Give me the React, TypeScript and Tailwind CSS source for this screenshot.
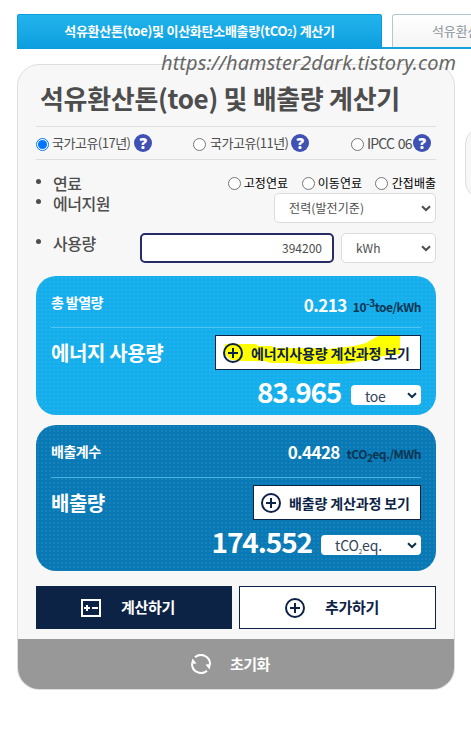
import React from "react";

function Radio({ checked = false }: { checked?: boolean }) {
  return (
    <span
      className={
        checked
          ? "flex size-[13px] shrink-0 items-center justify-center rounded-full border border-[#0075ff] bg-white"
          : "block size-[13px] shrink-0 rounded-full border border-[#767676] bg-white"
      }
    >
      {checked && <span className="size-[9px] rounded-full bg-[#0075ff]" />}
    </span>
  );
}

function Help() {
  return (
    <span className="flex size-[18px] shrink-0 items-center justify-center rounded-full bg-[#3f51b5] font-['Open_Sans',sans-serif] text-[15px] leading-[18px] font-extrabold text-white">
      ?
    </span>
  );
}

function Chevron({ className }: { className: string }) {
  return (
    <svg viewBox="0 0 10 7" className={`h-[7px] w-[10px] shrink-0 ${className}`} fill="none" stroke="currentColor" strokeWidth="2">
      <path d="M1 1.2 5 5 9 1.2" />
    </svg>
  );
}

function Plus() {
  return (
    <svg viewBox="0 0 20 20" className="size-5 shrink-0" fill="none" stroke="currentColor" strokeWidth="2">
      <circle cx="10" cy="10" r="9" />
      <path d="M5 10h10M10 5v10" />
    </svg>
  );
}

function Bullet() {
  return <span className="block size-[5px] shrink-0 rounded-full bg-[#4d4d4d]" />;
}

const dots = "bg-[radial-gradient(circle,rgba(255,255,255,0.13)_0.5px,transparent_0.9px)] bg-[size:4px_4px]";

export default function App() {
  return (
    <div className="relative h-[733px] w-[471px] overflow-hidden bg-white pt-[14px] font-['Noto_Sans_CJK_KR',sans-serif] whitespace-nowrap text-[#4d4d4d]">
      <nav className="ml-[17px] flex h-[35px] w-[600px] border-b-2 border-[#12a0df]">
        <div className="flex h-[35px] w-[365px] shrink-0 items-center justify-center rounded-t-[2px] border border-[#0a9bdb] bg-linear-to-b from-[#22b4ed] to-[#0c9edf] pb-[2px] text-[13px] font-bold tracking-[-0.27px] text-white">
          <span>석유환산톤(toe)및 이산화탄소배출량(tCO<span className="text-[9px]">2</span>) 계산기</span>
        </div>
        <div className="ml-[10px] h-[33px] w-[220px] shrink-0 rounded-t-[3px] border border-b-0 border-[#b5c5d1] bg-linear-to-b from-white to-[#f4f4f4] pl-[39px] text-[13px] leading-[32px] tracking-[-0.1px] text-[#8b959b]">
          석유환산톤 계산기
        </div>
      </nav>

      <div className="mt-[15px] flex">
        <main className="ml-[17px] flex h-[626px] w-[438px] shrink-0 flex-col overflow-hidden rounded-[22px] border border-[#dedede] bg-[#f7f7f7]">
          <section className="h-[574px] shrink-0 px-[18px]">
            <h1 className="h-[61px] pt-[14px] pl-[4px] text-[26px] leading-[38px] font-bold tracking-[-0.32px]">
              석유환산톤(toe) 및 배출량 계산기
            </h1>

            <div className="flex h-[34px] items-center border-y border-[#dedede] text-[13px] tracking-[-0.5px]">
              <div className="flex w-[157px] items-center">
                <span className="pt-[3px]"><Radio checked /></span>
                <span className="ml-[3px] w-[82px] leading-[20px]">국가고유(17년)</span>
                <Help />
              </div>
              <div className="flex w-[158px] items-center">
                <span className="pt-[3px]"><Radio /></span>
                <span className="ml-[4px] w-[81px] leading-[20px]">국가고유(11년)</span>
                <Help />
              </div>
              <div className="flex items-center">
                <span className="pt-[3px]"><Radio /></span>
                <span className="ml-[3px] w-[46px] text-[14px] leading-[20px] tracking-[-0.85px] [word-spacing:1.5px]">IPCC 06</span>
                <Help />
              </div>
            </div>

            <div className="mt-[13px] flex h-[20px]">
              <div className="flex w-[192px] gap-[12px] text-[16px] leading-[20px] font-medium tracking-[-0.5px]">
                <span className="pt-[6px]"><Bullet /></span>
                <span>연료</span>
              </div>
              <div className="flex items-center text-[12px] leading-[18px] text-black">
                <span className="pt-[1px]"><Radio /></span>
                <span className="ml-[3px] w-[58px]">고정연료</span>
                <span className="pt-[1px]"><Radio /></span>
                <span className="ml-[3px] w-[57px]">이동연료</span>
                <span className="pt-[1px]"><Radio /></span>
                <span className="ml-[4px]">간접배출</span>
              </div>
            </div>
            <div className="flex h-[40px] justify-between">
              <div className="flex gap-[12px] text-[16px] leading-[20px] font-medium tracking-[-0.5px]">
                <span className="pt-[6px]"><Bullet /></span>
                <span>에너지원</span>
              </div>
              <div className="flex h-[30px] w-[162px] items-center justify-between rounded-[5px] border border-[#dcdcdc] bg-white pl-[14px] text-[12px] tracking-[0.1px]">
                <span>전력(발전기준)</span>
                <Chevron className="mr-[4px]" />
              </div>
            </div>
            <div className="flex h-[43px]">
              <div className="flex w-[104px] gap-[12px] text-[16px] leading-[20px] font-medium tracking-[-0.5px]">
                <span className="pt-[6px]"><Bullet /></span>
                <span>사용량</span>
              </div>
              <div className="h-[30px] w-[194px] rounded-[5px] border-2 border-[#262c66] bg-white pr-[10px] text-right text-[12px] leading-[26px]">
                394200
              </div>
              <div className="ml-[7px] flex h-[30px] w-[95px] items-center justify-between rounded-[5px] border border-[#dcdcdc] bg-white pl-[14px] text-[12px]">
                <span>kWh</span>
                <Chevron className="mr-[4px]" />
              </div>
            </div>

            <section className={`h-[139px] rounded-[20px] bg-[#13aeeb] px-[15px] ${dots}`}>
              <div className="flex h-[52px] justify-between border-b border-[#50c5f3]">
                <span className="pt-[16px] text-[14px] leading-[20px] font-bold tracking-[-0.6px] text-white">총 발열량</span>
                <div className="flex items-baseline pt-[17px] leading-[24px] font-bold">
                  <span className="text-[17px] tracking-[-0.5px] text-white">0.213</span>
                  <span className="ml-[6px] text-[12px] tracking-[-0.5px] text-[#0c3553]">10<sup className="text-[10px]">-3</sup>toe/kWh</span>
                </div>
              </div>
              <div className="flex justify-between pt-[7px]">
                <span className="pt-[3px] text-[20px] leading-[30px] font-bold tracking-[-0.4px] text-white">에너지 사용량</span>
                <div className="relative flex h-[35px] w-[206px] items-center border border-[#0d2346] bg-white pl-[7px] text-[#0d2346]">
                  <svg viewBox="0 0 204 33" className="absolute inset-0 size-full" fill="#ff0">
                    <path d="M9 8H40L42 10H56L58 12H104L112 13L138 10L150 7L162 0H184V18L167 20L160 23L140 26L128 28H84L76 27H55L48 25L26 25L15 24L8 17Z" />
                  </svg>
                  <div className="relative flex items-center">
                    <Plus />
                    <span className="ml-[8px] text-[14px] leading-[20px] font-bold tracking-[-0.15px]">에너지사용량 계산과정 보기</span>
                  </div>
                </div>
              </div>
              <div className="flex justify-end">
                <span className="mt-[3px] mr-[10px] text-[28px] leading-[36px] font-bold tracking-[-1.3px] text-white">83.965</span>
                <div className="mt-[15px] flex h-[20px] w-[70px] items-center justify-between rounded-[4px] bg-white pl-[14px] text-[14px] leading-[20px] tracking-[-0.3px] text-[#30435b]">
                  <span className="pt-[2px]">toe</span>
                  <Chevron className="mr-[4px] text-[#0d3048]" />
                </div>
              </div>
            </section>

            <section className={`mt-[10px] h-[146px] rounded-[20px] bg-[#0879b4] px-[15px] ${dots}`}>
              <div className="flex h-[53px] justify-between border-b border-[#3eb9ea]">
                <span className="pt-[16px] text-[14px] leading-[20px] font-bold tracking-[-0.5px] text-white">배출계수</span>
                <div className="flex items-baseline pt-[15px] leading-[24px] font-bold">
                  <span className="text-[17px] tracking-[-0.6px] text-white">0.4428</span>
                  <span className="ml-[7px] text-[12px] tracking-[-0.5px] text-[#0c3553]">tCO<sub className="text-[10px]">2</sub>eq./MWh</span>
                </div>
              </div>
              <div className="flex justify-between pt-[7px]">
                <span className="pt-[3px] text-[20px] leading-[30px] font-bold tracking-[-0.5px] text-white">배출량</span>
                <div className="flex h-[35px] w-[168px] items-center border border-[#0d2346] bg-white pl-[7px] text-[#0d2346]">
                  <Plus />
                  <span className="ml-[8px] text-[14px] leading-[20px] font-bold tracking-[-0.15px]">배출량 계산과정 보기</span>
                </div>
              </div>
              <div className="flex justify-end">
                <span className="mt-[3px] mr-[9px] text-[28px] leading-[36px] font-bold tracking-[-1.1px] text-white">174.552</span>
                <div className="mt-[15px] flex h-[20px] w-[100px] items-center justify-between rounded-[4px] bg-white pl-[14px] text-[14px] leading-[20px] text-[#30435b]">
                  <span className="h-[20px] tracking-[-0.1px]">tCO<span className="inline-block translate-y-[3px] text-[6px] leading-none">2</span>eq.</span>
                  <Chevron className="mr-[4px] text-[#0d3048]" />
                </div>
              </div>
            </section>

            <div className="mt-[15px] flex h-[43px] gap-[7px] text-[15px] font-bold tracking-[-0.3px]">
              <div className="flex w-[196px] items-center bg-[#0d2346] pl-[45px] text-white">
                <svg viewBox="0 0 20 18" className="h-[18px] w-[20px]" fill="none" stroke="currentColor" strokeWidth="2">
                  <rect x="1" y="1" width="18" height="16" />
                  <path d="M3 9h6M6 6v6M11 9h6" />
                </svg>
                <span className="ml-[20px]">계산하기</span>
              </div>
              <div className="flex w-[197px] items-center border border-[#0d2346] bg-white pl-[45px] text-[#0d2346]">
                <Plus />
                <span className="ml-[20px]">추가하기</span>
              </div>
            </div>
          </section>

          <footer className="flex h-[50px] shrink-0 items-center bg-[#989898] pl-[173px] text-[15px] font-bold tracking-[-0.5px] text-white">
            <svg viewBox="0 0 20 20" className="size-5" fill="none" stroke="currentColor" strokeWidth="2">
              <path d="M4 3.3A9 9 0 0 1 19 10M16 16.7A9 9 0 0 1 1 10" />
              <path d="M0 10 1.5 4.5 5.5 9.5ZM20 10 18.5 15.5 14.5 10.5Z" fill="currentColor" stroke="none" />
            </svg>
            <span className="ml-[19px]">초기화</span>
          </footer>
        </main>
        <aside className="mt-[64px] ml-[10px] h-[70px] w-[60px] shrink-0 rounded-[16px] border border-[#dedede] bg-[#f7f7f7]" />
      </div>

      <p className="absolute top-[50px] left-[161px] font-['Noto_Sans',sans-serif] text-[20px] leading-[26px] tracking-[0.07px] text-[#666] italic">
        https://hamster2dark.tistory.com
      </p>
    </div>
  );
}
